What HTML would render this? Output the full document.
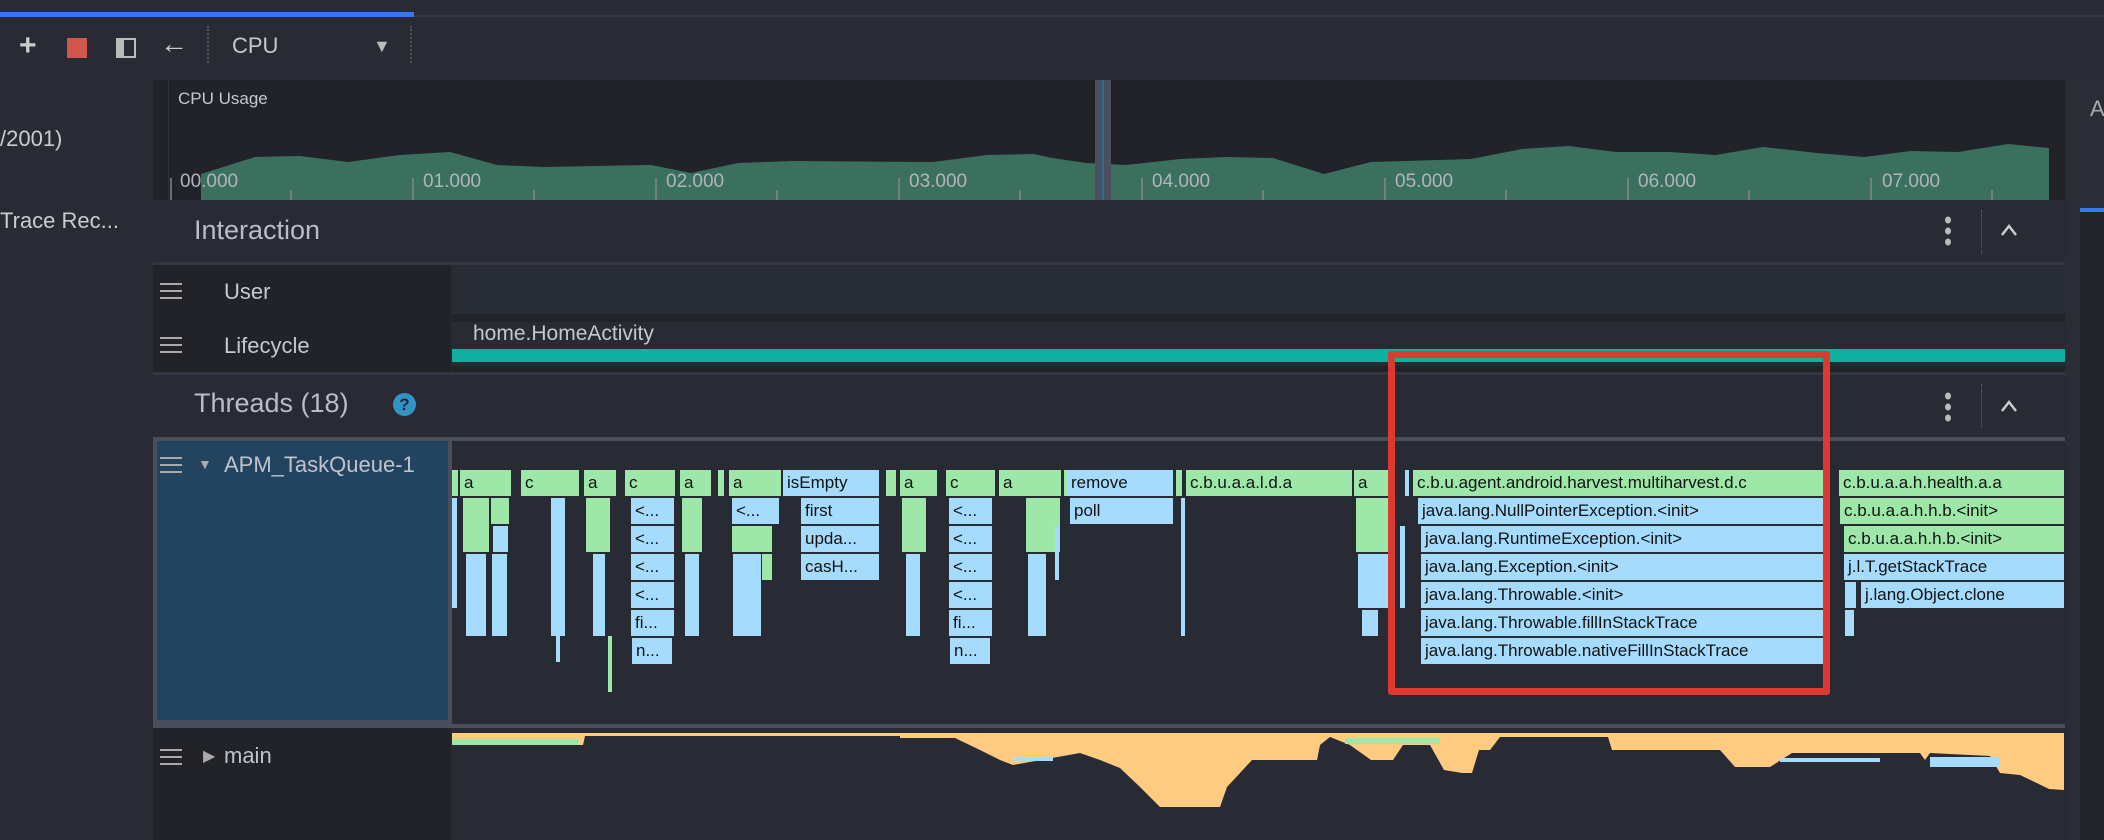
<!DOCTYPE html>
<html><head><meta charset="utf-8"><style>
*{margin:0;padding:0;box-sizing:border-box}
body{width:2104px;height:840px;overflow:hidden;background:#282b34;font-family:"Liberation Sans",sans-serif;position:relative;color:#bfc3cc}
.a{position:absolute}
.t{position:absolute;white-space:nowrap}
.g{position:absolute;background:#9de8a9;height:26px;color:#111;font-size:17px;line-height:26px;padding-left:4px;overflow:hidden}
.b{position:absolute;background:#a5dcfd;height:26px;color:#111;font-size:17px;line-height:26px;padding-left:4px;overflow:hidden}
.ham{position:absolute;width:22px;height:16px;border-top:2px solid #aaa;border-bottom:2px solid #aaa}
.ham:after{content:"";position:absolute;left:0;right:0;top:5px;border-top:2px solid #aaa}
</style></head><body>
<div class="a" style="left:0;top:0;width:2104px;height:16px;background:#282b34"></div>
<div class="a" style="left:0;top:12px;width:414px;height:5px;background:#3478f6"></div>
<div class="a" style="left:414px;top:15px;width:1690px;height:2px;background:#343843"></div>
<div class="t" style="left:19px;top:29px;font-size:30px;color:#ccc;font-weight:bold">+</div>
<div class="a" style="left:67px;top:38px;width:20px;height:20px;background:#d0574e"></div>
<div class="a" style="left:116px;top:38px;width:20px;height:20px;border:2px solid #bbb;border-left-width:8px"></div>
<div class="t" style="left:160px;top:28px;font-size:28px;color:#ccc">&#8592;</div>
<div class="a" style="left:207px;top:26px;height:37px;border-left:2px dotted #555"></div>
<div class="t" style="left:232px;top:33px;font-size:22px;color:#c5c8cf">CPU</div>
<div class="t" style="left:373px;top:36px;font-size:18px;color:#bbb">&#9660;</div>
<div class="a" style="left:410px;top:26px;height:37px;border-left:2px dotted #555"></div>
<div class="t" style="left:0;top:126px;font-size:22px;color:#c9ccd2">/2001)</div>
<div class="t" style="left:0;top:208px;font-size:22px;color:#c9ccd2">Trace Rec...</div>
<div class="a" style="left:2066px;top:80px;width:38px;height:760px;background:#2a2d35"></div>
<div class="t" style="left:2090px;top:96px;font-size:22px;color:#aaa">A</div>
<div class="a" style="left:2080px;top:208px;width:24px;height:4px;background:#3478f6"></div>
<div class="a" style="left:2080px;top:212px;width:24px;height:628px;background:#222429"></div>
<div class="a" style="left:153px;top:80px;width:1912px;height:120px;background:#212329"></div>
<div class="a" style="left:168px;top:80px;width:1px;height:120px;background:#2f323a"></div>
<svg class="a" style="left:0;top:0" width="2104" height="200">
<polygon fill="#3b705f" points="201,174 255,157 300,156 348,162 400,155 450,152 497,165 544,167 651,165 691,173 738,163 792,161 933,162 987,155 1034,154 1052,158 1086,163 1126,165 1180,159 1226,157 1273,158 1324,174 1371,162 1471,159 1522,149 1569,146 1616,152 1669,152 1716,155 1763,147 1817,153 1864,157 1911,151 1958,152 2008,144 2049,148 2049,200 201,200"/>
<g stroke="#888" stroke-width="1.5">
<line x1="171" y1="178" x2="171" y2="200"/><line x1="291" y1="190" x2="291" y2="200"/><line x1="413" y1="178" x2="413" y2="200"/><line x1="534" y1="190" x2="534" y2="200"/><line x1="656" y1="178" x2="656" y2="200"/><line x1="777" y1="190" x2="777" y2="200"/><line x1="899" y1="178" x2="899" y2="200"/><line x1="1020" y1="190" x2="1020" y2="200"/><line x1="1142" y1="178" x2="1142" y2="200"/><line x1="1263" y1="190" x2="1263" y2="200"/><line x1="1385" y1="178" x2="1385" y2="200"/><line x1="1506" y1="190" x2="1506" y2="200"/><line x1="1628" y1="178" x2="1628" y2="200"/><line x1="1749" y1="190" x2="1749" y2="200"/><line x1="1871" y1="178" x2="1871" y2="200"/><line x1="1992" y1="190" x2="1992" y2="200"/></g>
</svg>
<div class="a" style="left:1095px;top:80px;width:16px;height:120px;background:#4a505d"></div>
<div class="a" style="left:1102px;top:80px;width:2px;height:120px;background:#2d6d95"></div>
<div class="t" style="left:178px;top:89px;font-size:17px;color:#c5c8cf">CPU Usage</div>
<div class="t" style="left:180px;top:171px;font-size:19px;color:#b0b4bc">00.000</div>
<div class="t" style="left:423px;top:171px;font-size:19px;color:#b0b4bc">01.000</div>
<div class="t" style="left:666px;top:171px;font-size:19px;color:#b0b4bc">02.000</div>
<div class="t" style="left:909px;top:171px;font-size:19px;color:#b0b4bc">03.000</div>
<div class="t" style="left:1152px;top:171px;font-size:19px;color:#b0b4bc">04.000</div>
<div class="t" style="left:1395px;top:171px;font-size:19px;color:#b0b4bc">05.000</div>
<div class="t" style="left:1638px;top:171px;font-size:19px;color:#b0b4bc">06.000</div>
<div class="t" style="left:1882px;top:171px;font-size:19px;color:#b0b4bc">07.000</div>
<div class="t" style="left:194px;top:215px;font-size:27px;color:#b9bdc6">Interaction</div>
<svg class="a" style="left:1940px;top:210px" width="80" height="50"><g fill="#bbb"><ellipse cx="8" cy="10" rx="3" ry="3.5"/><ellipse cx="8" cy="21" rx="3" ry="3.5"/><ellipse cx="8" cy="32" rx="3" ry="3.5"/></g><polyline points="62,25 69,16 76,25" fill="none" stroke="#ccc" stroke-width="2.5"/></svg>
<div class="a" style="left:1981px;top:210px;height:44px;border-left:1px dotted #666"></div>
<div class="a" style="left:153px;top:262px;width:1912px;height:3px;background:#333742"></div>
<div class="a" style="left:153px;top:265px;width:298px;height:107px;background:#212329"></div>
<div class="ham" style="left:160px;top:283px"></div>
<div class="t" style="left:224px;top:279px;font-size:22px;color:#c5c8cf">User</div>
<div class="ham" style="left:160px;top:337px"></div>
<div class="t" style="left:224px;top:333px;font-size:22px;color:#c5c8cf">Lifecycle</div>
<div class="a" style="left:452px;top:268px;width:1613px;height:46px;background:#282c35"></div>
<div class="a" style="left:452px;top:314px;width:1613px;height:8px;background:#212329"></div>
<div class="t" style="left:473px;top:322px;font-size:21px;color:#c5c8cf">home.HomeActivity</div>
<div class="a" style="left:452px;top:349px;width:1613px;height:13px;background:#12b0a0"></div>
<div class="a" style="left:452px;top:366px;width:1613px;height:6px;background:#212329"></div>
<div class="a" style="left:153px;top:372px;width:1912px;height:3px;background:#333742"></div>
<div class="t" style="left:194px;top:388px;font-size:27px;color:#b9bdc6">Threads (18)</div>
<div class="a" style="left:393px;top:393px;width:23px;height:23px;border-radius:50%;background:#3592c4;color:#1b2a3a;font-size:17px;font-weight:bold;text-align:center;line-height:23px">?</div>
<svg class="a" style="left:1940px;top:384px" width="80" height="50"><g fill="#bbb"><ellipse cx="8" cy="12" rx="3" ry="3.5"/><ellipse cx="8" cy="23" rx="3" ry="3.5"/><ellipse cx="8" cy="34" rx="3" ry="3.5"/></g><polyline points="62,27 69,18 76,27" fill="none" stroke="#ccc" stroke-width="2.5"/></svg>
<div class="a" style="left:1981px;top:384px;height:44px;border-left:1px dotted #666"></div>
<div class="a" style="left:153px;top:437px;width:1912px;height:4px;background:#4a4e5a"></div>
<div class="a" style="left:153px;top:441px;width:299px;height:283px;background:#22445f;border:4px solid #4a4e5a;border-top:0"></div>
<div class="ham" style="left:160px;top:457px"></div>
<div class="t" style="left:198px;top:456px;font-size:14px;color:#aaa">&#9660;</div>
<div class="t" style="left:224px;top:452px;font-size:22px;color:#bfc3cc">APM_TaskQueue-1</div>
<div class="g" style="left:452px;top:470px;width:6px"></div>
<div class="g" style="left:460px;top:470px;width:51px">a</div>
<div class="g" style="left:521px;top:470px;width:58px">c</div>
<div class="g" style="left:584px;top:470px;width:32px">a</div>
<div class="g" style="left:625px;top:470px;width:50px">c</div>
<div class="g" style="left:680px;top:470px;width:31px">a</div>
<div class="g" style="left:718px;top:470px;width:6px"></div>
<div class="g" style="left:729px;top:470px;width:52px">a</div>
<div class="b" style="left:783px;top:470px;width:96px">isEmpty</div>
<div class="g" style="left:886px;top:470px;width:10px"></div>
<div class="g" style="left:900px;top:470px;width:37px">a</div>
<div class="g" style="left:946px;top:470px;width:49px">c</div>
<div class="g" style="left:999px;top:470px;width:62px">a</div>
<div class="g" style="left:1064px;top:470px;width:3px"></div>
<div class="b" style="left:1067px;top:470px;width:106px">remove</div>
<div class="g" style="left:1176px;top:470px;width:6px"></div>
<div class="g" style="left:1186px;top:470px;width:166px">c.b.u.a.a.l.d.a</div>
<div class="g" style="left:1354px;top:470px;width:34px">a</div>
<div class="b" style="left:1405px;top:470px;width:4px"></div>
<div class="g" style="left:1413px;top:470px;width:411px">c.b.u.agent.android.harvest.multiharvest.d.c</div>
<div class="g" style="left:1839px;top:470px;width:225px">c.b.u.a.a.h.health.a.a</div>
<div class="b" style="left:452px;top:498px;width:5px;height:110px"></div>
<div class="g" style="left:463px;top:498px;width:26px;height:54px"></div>
<div class="g" style="left:491px;top:498px;width:18px;height:26px"></div>
<div class="b" style="left:493px;top:526px;width:15px;height:26px"></div>
<div class="b" style="left:466px;top:554px;width:20px;height:82px"></div>
<div class="b" style="left:492px;top:554px;width:15px;height:82px"></div>
<div class="b" style="left:551px;top:498px;width:14px;height:138px"></div>
<div class="b" style="left:556px;top:636px;width:3px;height:26px"></div>
<div class="g" style="left:586px;top:498px;width:24px;height:54px"></div>
<div class="b" style="left:593px;top:554px;width:12px;height:82px"></div>
<div class="g" style="left:608px;top:636px;width:2px;height:56px"></div>
<div class="b" style="left:631px;top:498px;width:43px">&lt;...</div>
<div class="b" style="left:631px;top:526px;width:43px">&lt;...</div>
<div class="b" style="left:631px;top:554px;width:43px">&lt;...</div>
<div class="b" style="left:631px;top:582px;width:43px">&lt;...</div>
<div class="b" style="left:631px;top:610px;width:43px">fi...</div>
<div class="b" style="left:632px;top:638px;width:40px">n...</div>
<div class="g" style="left:682px;top:498px;width:20px;height:54px"></div>
<div class="b" style="left:685px;top:554px;width:14px;height:82px"></div>
<div class="b" style="left:732px;top:498px;width:47px">&lt;...</div>
<div class="g" style="left:732px;top:526px;width:40px"></div>
<div class="b" style="left:733px;top:554px;width:28px;height:82px"></div>
<div class="g" style="left:762px;top:554px;width:10px;height:26px"></div>
<div class="b" style="left:801px;top:498px;width:78px">first</div>
<div class="b" style="left:801px;top:526px;width:78px">upda...</div>
<div class="b" style="left:801px;top:554px;width:78px">casH...</div>
<div class="g" style="left:902px;top:498px;width:24px;height:54px"></div>
<div class="b" style="left:906px;top:554px;width:14px;height:82px"></div>
<div class="b" style="left:949px;top:498px;width:43px">&lt;...</div>
<div class="b" style="left:949px;top:526px;width:43px">&lt;...</div>
<div class="b" style="left:949px;top:554px;width:43px">&lt;...</div>
<div class="b" style="left:949px;top:582px;width:43px">&lt;...</div>
<div class="b" style="left:949px;top:610px;width:43px">fi...</div>
<div class="b" style="left:950px;top:638px;width:40px">n...</div>
<div class="g" style="left:1026px;top:498px;width:34px;height:54px"></div>
<div class="b" style="left:1028px;top:554px;width:18px;height:82px"></div>
<div class="b" style="left:1070px;top:498px;width:103px">poll</div>
<div class="b" style="left:1055px;top:526px;width:3px;height:54px"></div>
<div class="b" style="left:1181px;top:498px;width:3px;height:138px"></div>
<div class="g" style="left:1356px;top:498px;width:32px;height:54px"></div>
<div class="b" style="left:1358px;top:554px;width:30px;height:54px"></div>
<div class="b" style="left:1362px;top:610px;width:16px;height:26px"></div>
<div class="b" style="left:1400px;top:526px;width:5px;height:82px"></div>
<div class="b" style="left:1418px;top:498px;width:406px">java.lang.NullPointerException.&lt;init&gt;</div>
<div class="b" style="left:1421px;top:526px;width:403px">java.lang.RuntimeException.&lt;init&gt;</div>
<div class="b" style="left:1421px;top:554px;width:403px">java.lang.Exception.&lt;init&gt;</div>
<div class="b" style="left:1421px;top:582px;width:403px">java.lang.Throwable.&lt;init&gt;</div>
<div class="b" style="left:1421px;top:610px;width:403px">java.lang.Throwable.fillInStackTrace</div>
<div class="b" style="left:1421px;top:638px;width:403px">java.lang.Throwable.nativeFillInStackTrace</div>
<div class="g" style="left:1840px;top:498px;width:224px">c.b.u.a.a.h.h.b.&lt;init&gt;</div>
<div class="g" style="left:1844px;top:526px;width:220px">c.b.u.a.a.h.h.b.&lt;init&gt;</div>
<div class="b" style="left:1844px;top:554px;width:220px">j.l.T.getStackTrace</div>
<div class="b" style="left:1845px;top:582px;width:11px"></div>
<div class="b" style="left:1861px;top:582px;width:203px">j.lang.Object.clone</div>
<div class="b" style="left:1845px;top:610px;width:9px"></div>
<div class="a" style="left:1388px;top:351px;width:442px;height:344px;border:7px solid #dc3a30;border-radius:3px"></div>
<div class="a" style="left:153px;top:724px;width:1912px;height:4px;background:#4a4e5a"></div>
<div class="a" style="left:153px;top:728px;width:298px;height:112px;background:#212329"></div>
<div class="ham" style="left:160px;top:749px"></div>
<div class="t" style="left:203px;top:746px;font-size:16px;color:#aaa">&#9654;</div>
<div class="t" style="left:224px;top:743px;font-size:22px;color:#bfc3cc">main</div>
<svg class="a" style="left:0;top:0" width="2104" height="840">
<polygon fill="#ffcb81" points="452,733 2064,733 2064,790 2049,789 2020,775 2000,773 1990,756 1930,753 1925,760 1920,753 1792,753 1770,767 1735,767 1720,750 1612,750 1608,737 1500,737 1490,750 1479,750 1472,773 1462,773 1444,770 1430,745 1403,745 1393,760 1371,760 1350,745 1330,737 1320,745 1317,760 1252,760 1240,773 1227,787 1220,807 1160,807 1140,787 1120,768 1100,760 1080,753 1013,765 1000,760 980,750 955,738 900,738 900,736 585,736 583,745 452,745"/>
<rect x="452" y="739" width="127" height="6" fill="#9de8a9"/>
<rect x="1345" y="738" width="95" height="6" fill="#9de8a9"/>
<rect x="1780" y="758" width="100" height="4" fill="#a5dcfd"/>
<rect x="1930" y="757" width="70" height="10" fill="#a5dcfd"/>
<rect x="1013" y="757" width="40" height="4" fill="#a5dcfd"/>
</svg>
</body></html>
